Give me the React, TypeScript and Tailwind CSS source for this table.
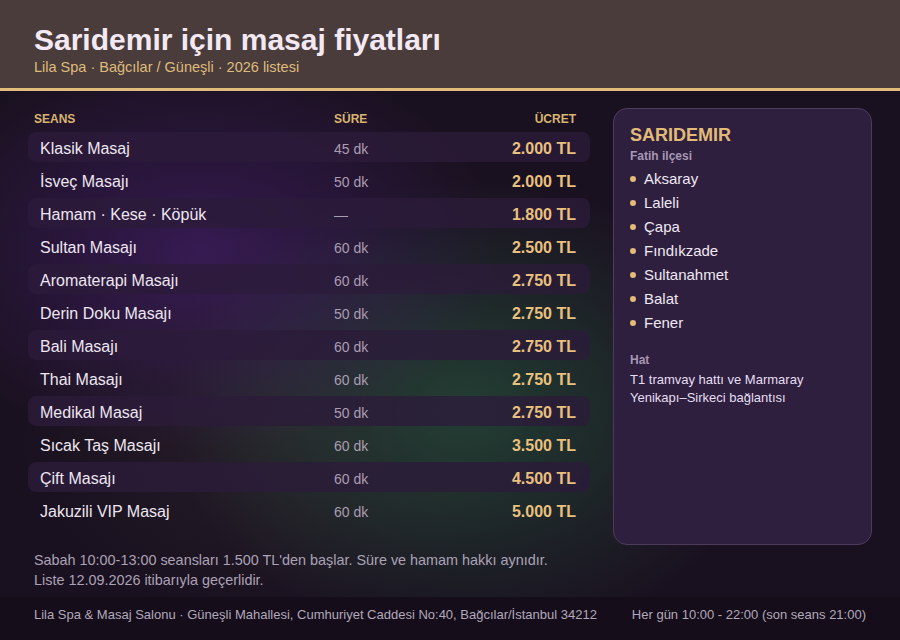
import React from "react";

const rows = [
  { name: "Klasik Masaj", dur: "45 dk", price: "2.000 TL" },
  { name: "İsveç Masajı", dur: "50 dk", price: "2.000 TL" },
  { name: "Hamam · Kese · Köpük", dur: "—", price: "1.800 TL" },
  { name: "Sultan Masajı", dur: "60 dk", price: "2.500 TL" },
  { name: "Aromaterapi Masajı", dur: "60 dk", price: "2.750 TL" },
  { name: "Derin Doku Masajı", dur: "50 dk", price: "2.750 TL" },
  { name: "Bali Masajı", dur: "60 dk", price: "2.750 TL" },
  { name: "Thai Masajı", dur: "60 dk", price: "2.750 TL" },
  { name: "Medikal Masaj", dur: "50 dk", price: "2.750 TL" },
  { name: "Sıcak Taş Masajı", dur: "60 dk", price: "3.500 TL" },
  { name: "Çift Masajı", dur: "60 dk", price: "4.500 TL" },
  { name: "Jakuzili VIP Masaj", dur: "60 dk", price: "5.000 TL" },
];

const places = ["Aksaray", "Laleli", "Çapa", "Fındıkzade", "Sultanahmet", "Balat", "Fener"];

export default function App() {
  return (
    <div className="flex h-[640px] w-[900px] flex-col overflow-hidden bg-[#1a1120] font-[Liberation_Sans,Arial,Helvetica,sans-serif]">
      {/* header */}
      <header className="h-[91px] shrink-0 border-b-[3px] border-[#e2bc7c] bg-[#4a3c3b] pl-[34px] pt-[22px]">
        <h1 className="text-[30px] leading-[36px] font-bold text-[#f3e9f4]">Saridemir için masaj fiyatları</h1>
        <p className="text-[14.5px] leading-[18px] text-[#dfbb7b]">Lila Spa · Bağcılar / Güneşli · 2026 listesi</p>
      </header>

      {/* body */}
      <main className="flex flex-1 flex-col bg-[radial-gradient(ellipse_300px_200px_at_200px_160px,rgba(72,32,115,0.6),transparent),radial-gradient(ellipse_300px_230px_at_470px_320px,rgba(38,90,62,0.6),transparent),radial-gradient(ellipse_260px_200px_at_280px_330px,rgba(70,60,60,0.3),transparent)]">
        <div className="flex gap-[23px] px-[28px] pt-[17px]">
          {/* price table */}
          <section className="w-[562px] shrink-0">
            <div className="grid grid-cols-[300px_1fr_auto] pl-[6px] pr-[14px] pt-[3px] pb-[5px] text-[12px] leading-[16px] font-bold text-[#d8b470]">
              <span>SEANS</span>
              <span>SÜRE</span>
              <span>ÜCRET</span>
            </div>
            <div className="flex flex-col gap-[3px]">
              {rows.map((r, i) => (
                <div
                  key={r.name}
                  className={
                    "grid h-[30px] grid-cols-[294px_1fr_auto] items-center rounded-[8px] pl-[12px] pr-[14px] pt-[4px] " +
                    (i % 2 === 0 ? "bg-[rgba(44,27,58,0.78)]" : "")
                  }
                >
                  <span className="text-[16px] text-[#ede6f1]">{r.name}</span>
                  <span className="text-[14px] text-[#a99db2]">{r.dur}</span>
                  <span className="text-[16px] font-bold text-[#e9c07e]">{r.price}</span>
                </div>
              ))}
            </div>
          </section>

          {/* district card */}
          <aside className="h-[437px] w-[260px] rounded-[14px] border border-[#4c3b5e] bg-[#2e1f3f] pl-[16px] pr-[14px] pt-[15px]">
            <h2 className="text-[18px] leading-[22px] font-bold text-[#e3bb78]">SARIDEMIR</h2>
            <p className="mt-[2px] text-[12px] leading-[16px] font-bold text-[#a797b3]">Fatih ilçesi</p>
            <ul className="mt-[3px] flex flex-col">
              {places.map((p) => (
                <li key={p} className="flex h-[24px] items-center gap-[8px] text-[15px] text-[#efe8f2]">
                  <span className="h-[6px] w-[6px] rounded-full bg-[#e3bb78]" />
                  {p}
                </li>
              ))}
            </ul>
            <p className="mt-[17px] text-[12px] leading-[16px] font-bold text-[#a797b3]">Hat</p>
            <p className="mt-[3px] text-[13px] leading-[18px] text-[#e6def0]">
              T1 tramvay hattı ve Marmaray
              <br />
              Yenikapı–Sirkeci bağlantısı
            </p>
          </aside>
        </div>

        <div className="mt-auto px-[34px] pb-[7px] text-[14.4px] leading-[20px] text-[#aba2b5]">
          <p>Sabah 10:00-13:00 seansları 1.500 TL'den başlar. Süre ve hamam hakkı aynıdır.</p>
          <p>Liste 12.09.2026 itibarıyla geçerlidir.</p>
        </div>
      </main>

      {/* footer */}
      <footer className="flex h-[43px] shrink-0 justify-between bg-[#150e1a] px-[34px] pt-[10px] text-[13px] leading-[16px] text-[#b1a8ba]">
        <span>Lila Spa &amp; Masaj Salonu · Güneşli Mahallesi, Cumhuriyet Caddesi No:40, Bağcılar/İstanbul 34212</span>
        <span>Her gün 10:00 - 22:00 (son seans 21:00)</span>
      </footer>
    </div>
  );
}
